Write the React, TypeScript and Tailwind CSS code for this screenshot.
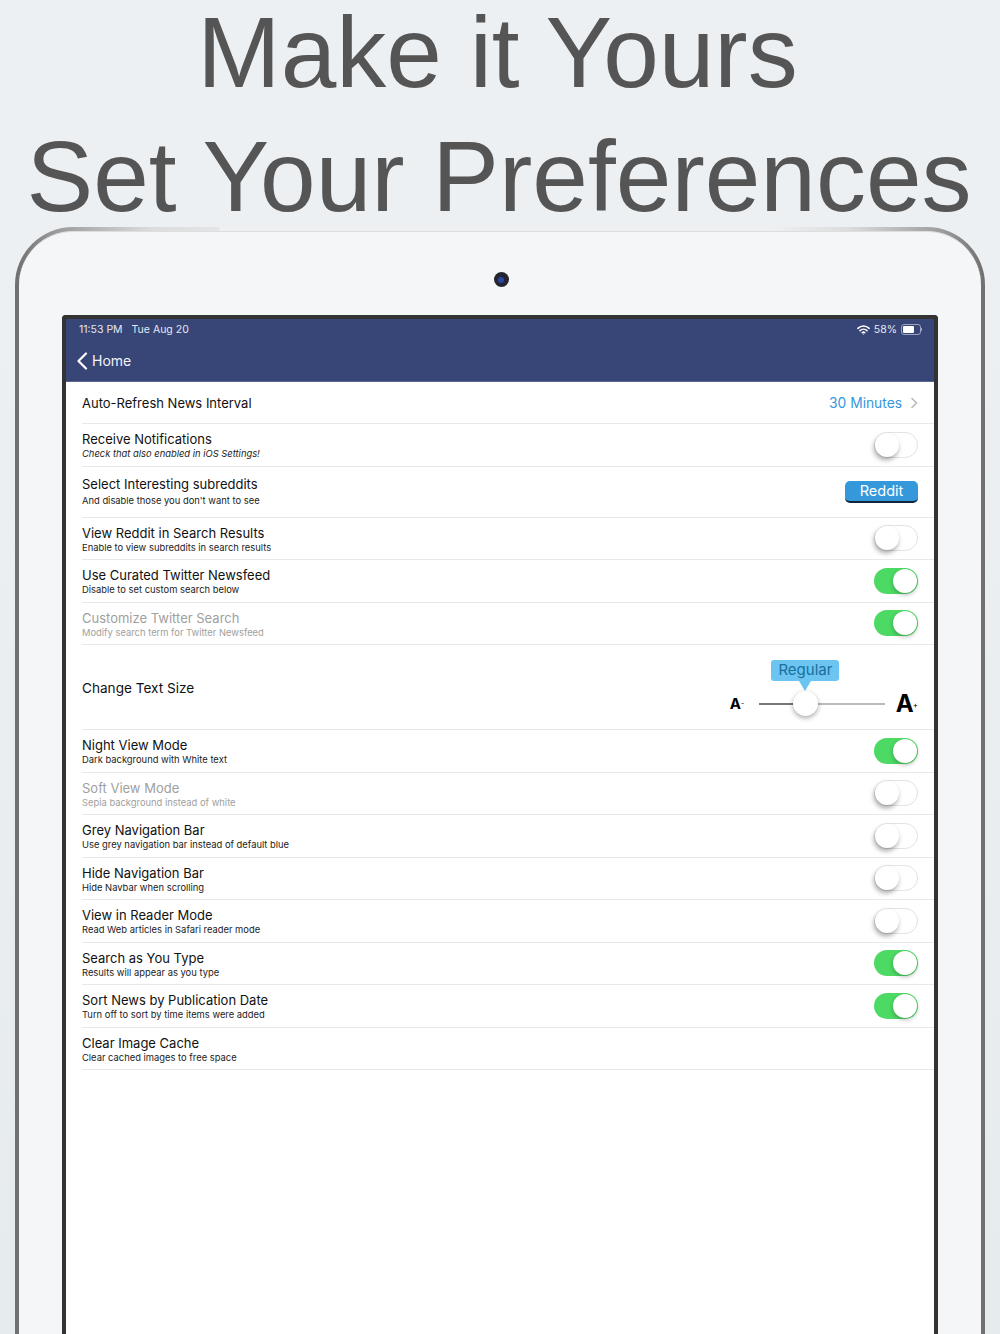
const font = { fontFamily: "Inter, 'Noto Sans', sans-serif" };

type RowProps = {
  title: string;
  sub?: string;
  italic?: boolean;
  muted?: boolean;
  roomy?: boolean;
  titleSize?: string;
  height?: string;
  children?: React.ReactNode;
};

function Row({ title, sub, italic, muted, roomy, titleSize = "text-[13px]", height = "h-[42.5px]", children }: RowProps) {
  return (
    <div className={`${height} ml-4 flex items-center justify-between border-b border-[#e8e8ea] pr-4`}>
      <div className={`flex flex-col ${roomy ? "gap-[2px]" : "pt-[2px]"}`}>
        <span className={`${titleSize} leading-[16px] ${muted ? "text-[#a0a0a0]" : "text-[#111]"}`}>{title}</span>
        {sub && (
          <span className={`text-[9.4px] leading-[13px] ${italic ? "italic" : ""} ${muted ? "text-[#a0a0a0]" : "text-[#222]"}`}>
            {sub}
          </span>
        )}
      </div>
      {children}
    </div>
  );
}

function Toggle({ on }: { on?: boolean }) {
  if (on) {
    return (
      <div className="flex h-[26px] w-[44px] items-center justify-end rounded-full bg-[#4cd964] pr-[1px]">
        <div className="h-[24px] w-[24px] rounded-full bg-white shadow-[0_2px_4px_rgba(0,0,0,0.25)]" />
      </div>
    );
  }
  return (
    <div className="flex h-[26px] w-[44px] items-center rounded-full border border-[#e3e3e3] bg-white">
      <div className="h-[24px] w-[24px] rounded-full bg-white shadow-[-1px_3px_5px_rgba(0,0,0,0.35)]" />
    </div>
  );
}

function Wifi() {
  return (
    <svg width="13" height="10" viewBox="0 0 13 10" fill="none" stroke="#fff" strokeLinecap="round">
      <path d="M0.9 3.4a8 8 0 0 1 11.2 0" strokeWidth="1.5" />
      <path d="M3 5.6a5 5 0 0 1 7 0" strokeWidth="1.5" />
      <path d="M5.2 7.7a2 2 0 0 1 2.6 0" strokeWidth="1.5" />
      <circle cx="6.5" cy="9" r="0.6" fill="#fff" stroke="none" />
    </svg>
  );
}

export default function App() {
  return (
    <div
      className="h-[1334px] w-[1000px] overflow-hidden bg-[linear-gradient(to_bottom,#edf0f3,#ecf0f3_20%,#e6ebee)]"
      style={font}
    >
      {/* Headings */}
      <div
        className="flex h-[227px] flex-col items-center text-[100px] whitespace-nowrap text-[#555]"
        style={{ fontFamily: "'Liberation Sans', Arial, sans-serif" }}
      >
        <div className="pr-[5px] leading-[105px]">Make it Yours</div>
        <div className="mt-[21px] pr-[2px] leading-[100px]">Set Your Preferences</div>
      </div>

      {/* Device */}
      <div className="mx-[15px] h-[1107px] rounded-t-[58px] bg-[linear-gradient(to_right,#6f6f6f,#999_4%,#dcdcdc_14%,#e4e5e6_21%,#eef0f2_21.2%,#eef0f2_78%,#dcdcdc_86%,#999_96%,#6f6f6f)] px-[4px] pt-[4px]">
        <div className="flex h-full flex-col items-center rounded-t-[54px] border-t border-[#dcdee0] bg-[#f5f6f8]">
          <div className="mt-[40px] flex h-[15px] w-[15px] translate-x-[1px] items-center justify-center rounded-full bg-[#23262e]">
            <div className="h-[6px] w-[6px] rounded-full bg-[#2b45a8]" />
          </div>

          {/* Screen */}
          <div className="mt-[28px] w-[876px] flex-1 rounded-t-[4px] border-x-4 border-t-4 border-[#333] bg-white">
            {/* Nav bar */}
            <div className="h-[62.5px] border-b border-[#5a6690] bg-[#384577] text-white">
              <div className="flex h-[20px] items-center justify-between pt-[1px] pr-[12px] pl-[13px] text-[10.5px] text-[#e6e8f0]">
                <div className="flex gap-[9px]">
                  <span>11:53 PM</span>
                  <span>Tue Aug 20</span>
                </div>
                <div className="flex items-center gap-[4px]">
                  <Wifi />
                  <span>58%</span>
                  <div className="flex items-center">
                    <div className="flex h-[11px] w-[20px] items-center rounded-[3px] border border-[#9aa2bf] px-[1px]">
                      <div className="h-[7px] w-[11px] rounded-[1px] bg-white" />
                    </div>
                    <div className="h-[3px] w-[1px] bg-[#9aa2bf]" />
                  </div>
                </div>
              </div>
              <div className="flex h-[41px] items-center pt-[2px] pl-[10px] text-[14px] text-[#f2f3f7]">
                <svg width="13" height="18" viewBox="0 0 13 18" fill="none" stroke="#fff" strokeWidth="2.2" strokeLinecap="round" strokeLinejoin="round">
                  <path d="M10 1.5 2.5 9l7.5 7.5" />
                </svg>
                <span className="ml-[3px]">Home</span>
              </div>
            </div>

            {/* Settings list */}
            <Row title="Auto-Refresh News Interval">
              <div className="flex items-center gap-[8px] pt-[2px] text-[13.8px] text-[#3498db]">
                <span>30 Minutes</span>
                <svg width="8" height="12" viewBox="0 0 8 12" fill="none" stroke="#b8b8bc" strokeWidth="1.5">
                  <path d="M1.5 1 6.5 6l-5 5" />
                </svg>
              </div>
            </Row>
            <Row title="Receive Notifications" sub="Check that also enabled in iOS Settings!" italic>
              <Toggle />
            </Row>
            <Row title="Select Interesting subreddits" sub="And disable those you don't want to see" roomy height="h-[51px]">
              <div className="flex h-[22px] w-[73px] items-center justify-center rounded-[5px] border-b-2 border-[#10253a] bg-[#3498db] text-[14.5px] text-white">
                Reddit
              </div>
            </Row>
            <Row title="View Reddit in Search Results" sub="Enable to view subreddits in search results">
              <Toggle />
            </Row>
            <Row title="Use Curated Twitter Newsfeed" sub="Disable to set custom search below">
              <Toggle on />
            </Row>
            <Row title="Customize Twitter Search" sub="Modify search term for Twitter Newsfeed" muted>
              <Toggle on />
            </Row>

            <Row title="Change Text Size" titleSize="text-[13.6px]" height="h-[85px]">
              <div className="flex flex-col items-center pt-[2px]">
                <div className="relative mb-[11px] ml-[-37px] flex h-[21px] w-[68px] items-center justify-center rounded-[3px] bg-[#6cc5f0] text-[15px] text-[#1a6f9e]">
                  Regular
                  <div className="absolute top-[21px] left-[28px] h-0 w-0 border-x-[6px] border-t-[10px] border-x-transparent border-t-[#6cc5f0]" />
                </div>
                <div className="flex items-center">
                  <span className="w-[29px] text-[15px] leading-[20px] font-bold text-black">
                    A<sup className="text-[7px] font-normal">-</sup>
                  </span>
                  <div className="relative h-[2px] w-[126px] bg-[linear-gradient(to_right,#777_36%,#bbb_36%)]">
                    <div className="absolute top-[-12px] left-[34px] h-[25px] w-[25px] rounded-full bg-white shadow-[0_2px_5px_rgba(0,0,0,0.35)]" />
                  </div>
                  <span className="ml-[11px] text-[24px] leading-[24px] font-bold text-black">
                    A<sup className="ml-[-1px] text-[8px] font-normal">+</sup>
                  </span>
                </div>
              </div>
            </Row>

            <Row title="Night View Mode" sub="Dark background with White text">
              <Toggle on />
            </Row>
            <Row title="Soft View Mode" sub="Sepia background instead of white" muted>
              <Toggle />
            </Row>
            <Row title="Grey Navigation Bar" sub="Use grey navigation bar instead of default blue">
              <Toggle />
            </Row>
            <Row title="Hide Navigation Bar" sub="Hide Navbar when scrolling">
              <Toggle />
            </Row>
            <Row title="View in Reader Mode" sub="Read Web articles in Safari reader mode">
              <Toggle />
            </Row>
            <Row title="Search as You Type" sub="Results will appear as you type">
              <Toggle on />
            </Row>
            <Row title="Sort News by Publication Date" sub="Turn off to sort by time items were added">
              <Toggle on />
            </Row>
            <Row title="Clear Image Cache" sub="Clear cached images to free space" />
          </div>
        </div>
      </div>
    </div>
  );
}
